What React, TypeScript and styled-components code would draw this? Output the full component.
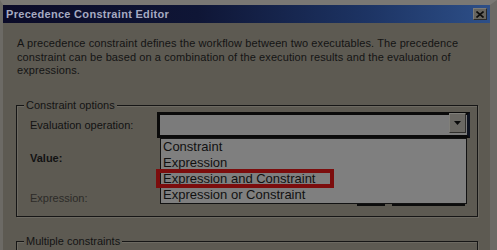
import React from "react";
import styled, { createGlobalStyle } from "styled-components";

const Global = createGlobalStyle`
  html, body { margin: 0; padding: 0; background: #7a7874; }
  body { width: 497px; height: 250px; overflow: hidden; }
`;

const Window = styled.div`
  position: relative;
  box-sizing: border-box;
  width: 497px;
  height: 250px;
  border-top: 5px solid #7a7874;
  border-left: 3px solid #6c6a65;
  border-right: 7px solid #6c6a65;
  background: #5d5a52;
  font-family: "Liberation Sans", Arial, sans-serif;
  font-size: 11px;
  color: #141414;
  overflow: hidden;
`;

const TitleBar = styled.div`
  display: flex;
  align-items: center;
  justify-content: space-between;
  height: 18px;
  padding: 0 2px 0 3px;
  background: linear-gradient(to right, #0b0b28 0%, #0f1636 40%, #1d3464 75%, #2d4f88 100%);
`;

const Title = styled.span`
  font-weight: bold;
  font-size: 11px;
  color: #a6aac2;
  letter-spacing: 0.3px;
`;

const CloseButton = styled.div`
  display: flex;
  align-items: center;
  justify-content: center;
  box-sizing: border-box;
  width: 14px;
  height: 12px;
  margin-right: 1px;
  background: #67655f;
  border: 1px solid #2a2a2a;
  border-top-color: #7c7b77;
  border-left-color: #7c7b77;
`;

const Body = styled.div`
  padding: 14px 10px 0 13px;
`;

const Description = styled.p`
  margin: 0 0 0 1px;
  width: 445px;
  line-height: 13.5px;
  letter-spacing: 0.1px;
`;

const Group = styled.fieldset<{ $mt: number; $pb: number }>`
  margin: ${(p) => p.$mt}px 0 0 0;
  padding: 0 7px ${(p) => p.$pb}px 13px;
  border: 1px solid #161616;
  box-shadow: 1px 1px 0 #6c6961, inset 1px 1px 0 #6c6961;
  min-width: 0;
  width: 462px;
  box-sizing: border-box;
`;

const Legend = styled.legend`
  margin-left: -6px;
  padding: 0 2px;
  background: #5d5a52;
  line-height: 13px;
`;

const FieldRow = styled.div<{ $mt: number; $h: number }>`
  display: grid;
  grid-template-columns: 127px 1fr;
  align-items: center;
  height: ${(p) => p.$h}px;
  margin-top: ${(p) => p.$mt}px;
`;

const Label = styled.span<{ $disabled?: boolean; $strong?: boolean }>`
  color: ${(p) => (p.$disabled ? "#2c2b28" : "#121212")};
  font-weight: ${(p) => (p.$strong ? 600 : "normal")};
`;

const Combo = styled.div`
  position: relative;
  box-sizing: border-box;
  height: 26px;
  border: 3px solid #0a0a0a;
  border-right-color: #0e1320;
  background: #7b7b7b;
  display: flex;
  justify-content: flex-end;
  align-items: flex-start;
  padding: 0 1px 0 0;
  z-index: 2;
`;

const DropButton = styled.div`
  box-sizing: border-box;
  width: 17px;
  height: 20px;
  margin-top: -2px;
  background: #6a6863;
  border: 1px solid #2f2e2b;
  border-top-color: #807f7a;
  border-left-color: #807f7a;
  display: flex;
  align-items: center;
  justify-content: center;
`;

const List = styled.ul`
  position: absolute;
  top: 23px;
  left: 0;
  width: 307px;
  height: 66px;
  margin: 0;
  padding: 0;
  box-sizing: border-box;
  list-style: none;
  background: #7f7f7f;
  border: 1px solid #121212;
  font-size: 13px;
  color: #111;
`;

const Item = styled.li`
  height: 16px;
  line-height: 15px;
  padding-left: 2px;
  white-space: nowrap;
`;

const Highlight = styled.div`
  position: absolute;
  left: -5px;
  top: 30px;
  width: 178px;
  height: 19px;
  box-sizing: border-box;
  border: 4px solid #7c0d0d;
`;

const ExprControls = styled.div`
  display: flex;
  gap: 7px;
  padding-left: 200px;
  align-self: start;
  margin-top: -1px;
`;

const Ghost = styled.div<{ $w: number }>`
  width: ${(p) => p.$w}px;
  height: 20px;
  box-sizing: border-box;
  border-bottom: 2px solid #0c0c0c;
`;

export default function App() {
  return (
    <>
      <Global />
      <Window>
        <TitleBar>
          <Title>Precedence Constraint Editor</Title>
          <CloseButton>
            <svg width="8" height="7" viewBox="0 0 8 7">
              <path d="M0.5 0.5 L7.5 6.5 M7.5 0.5 L0.5 6.5" stroke="#0c0c0c" strokeWidth="1.6" />
            </svg>
          </CloseButton>
        </TitleBar>
        <Body>
          <Description>
            A precedence constraint defines the workflow between two executables. The precedence
            constraint can be based on a combination of the execution results and the evaluation of
            expressions.
          </Description>
          <Group $mt={21} $pb={7}>
            <Legend>Constraint options</Legend>
            <FieldRow $mt={0} $h={26}>
              <Label>Evaluation operation:</Label>
              <Combo>
                <DropButton>
                  <svg width="7" height="4" viewBox="0 0 7 4">
                    <path d="M0 0 H7 L3.5 4 Z" fill="#0a0a0a" />
                  </svg>
                </DropButton>
                <List>
                  <Item>Constraint</Item>
                  <Item>Expression</Item>
                  <Item>Expression and Constraint</Item>
                  <Item>Expression or Constraint</Item>
                  <Highlight />
                </List>
              </Combo>
            </FieldRow>
            <FieldRow $mt={10} $h={21}>
              <Label $strong>Value:</Label>
              <span />
            </FieldRow>
            <FieldRow $mt={18} $h={22}>
              <Label $disabled>Expression:</Label>
              <ExprControls>
                <Ghost $w={28} />
                <Ghost $w={73} />
              </ExprControls>
            </FieldRow>
          </Group>
          <Group $mt={18} $pb={20}>
            <Legend>Multiple constraints</Legend>
          </Group>
        </Body>
      </Window>
    </>
  );
}
